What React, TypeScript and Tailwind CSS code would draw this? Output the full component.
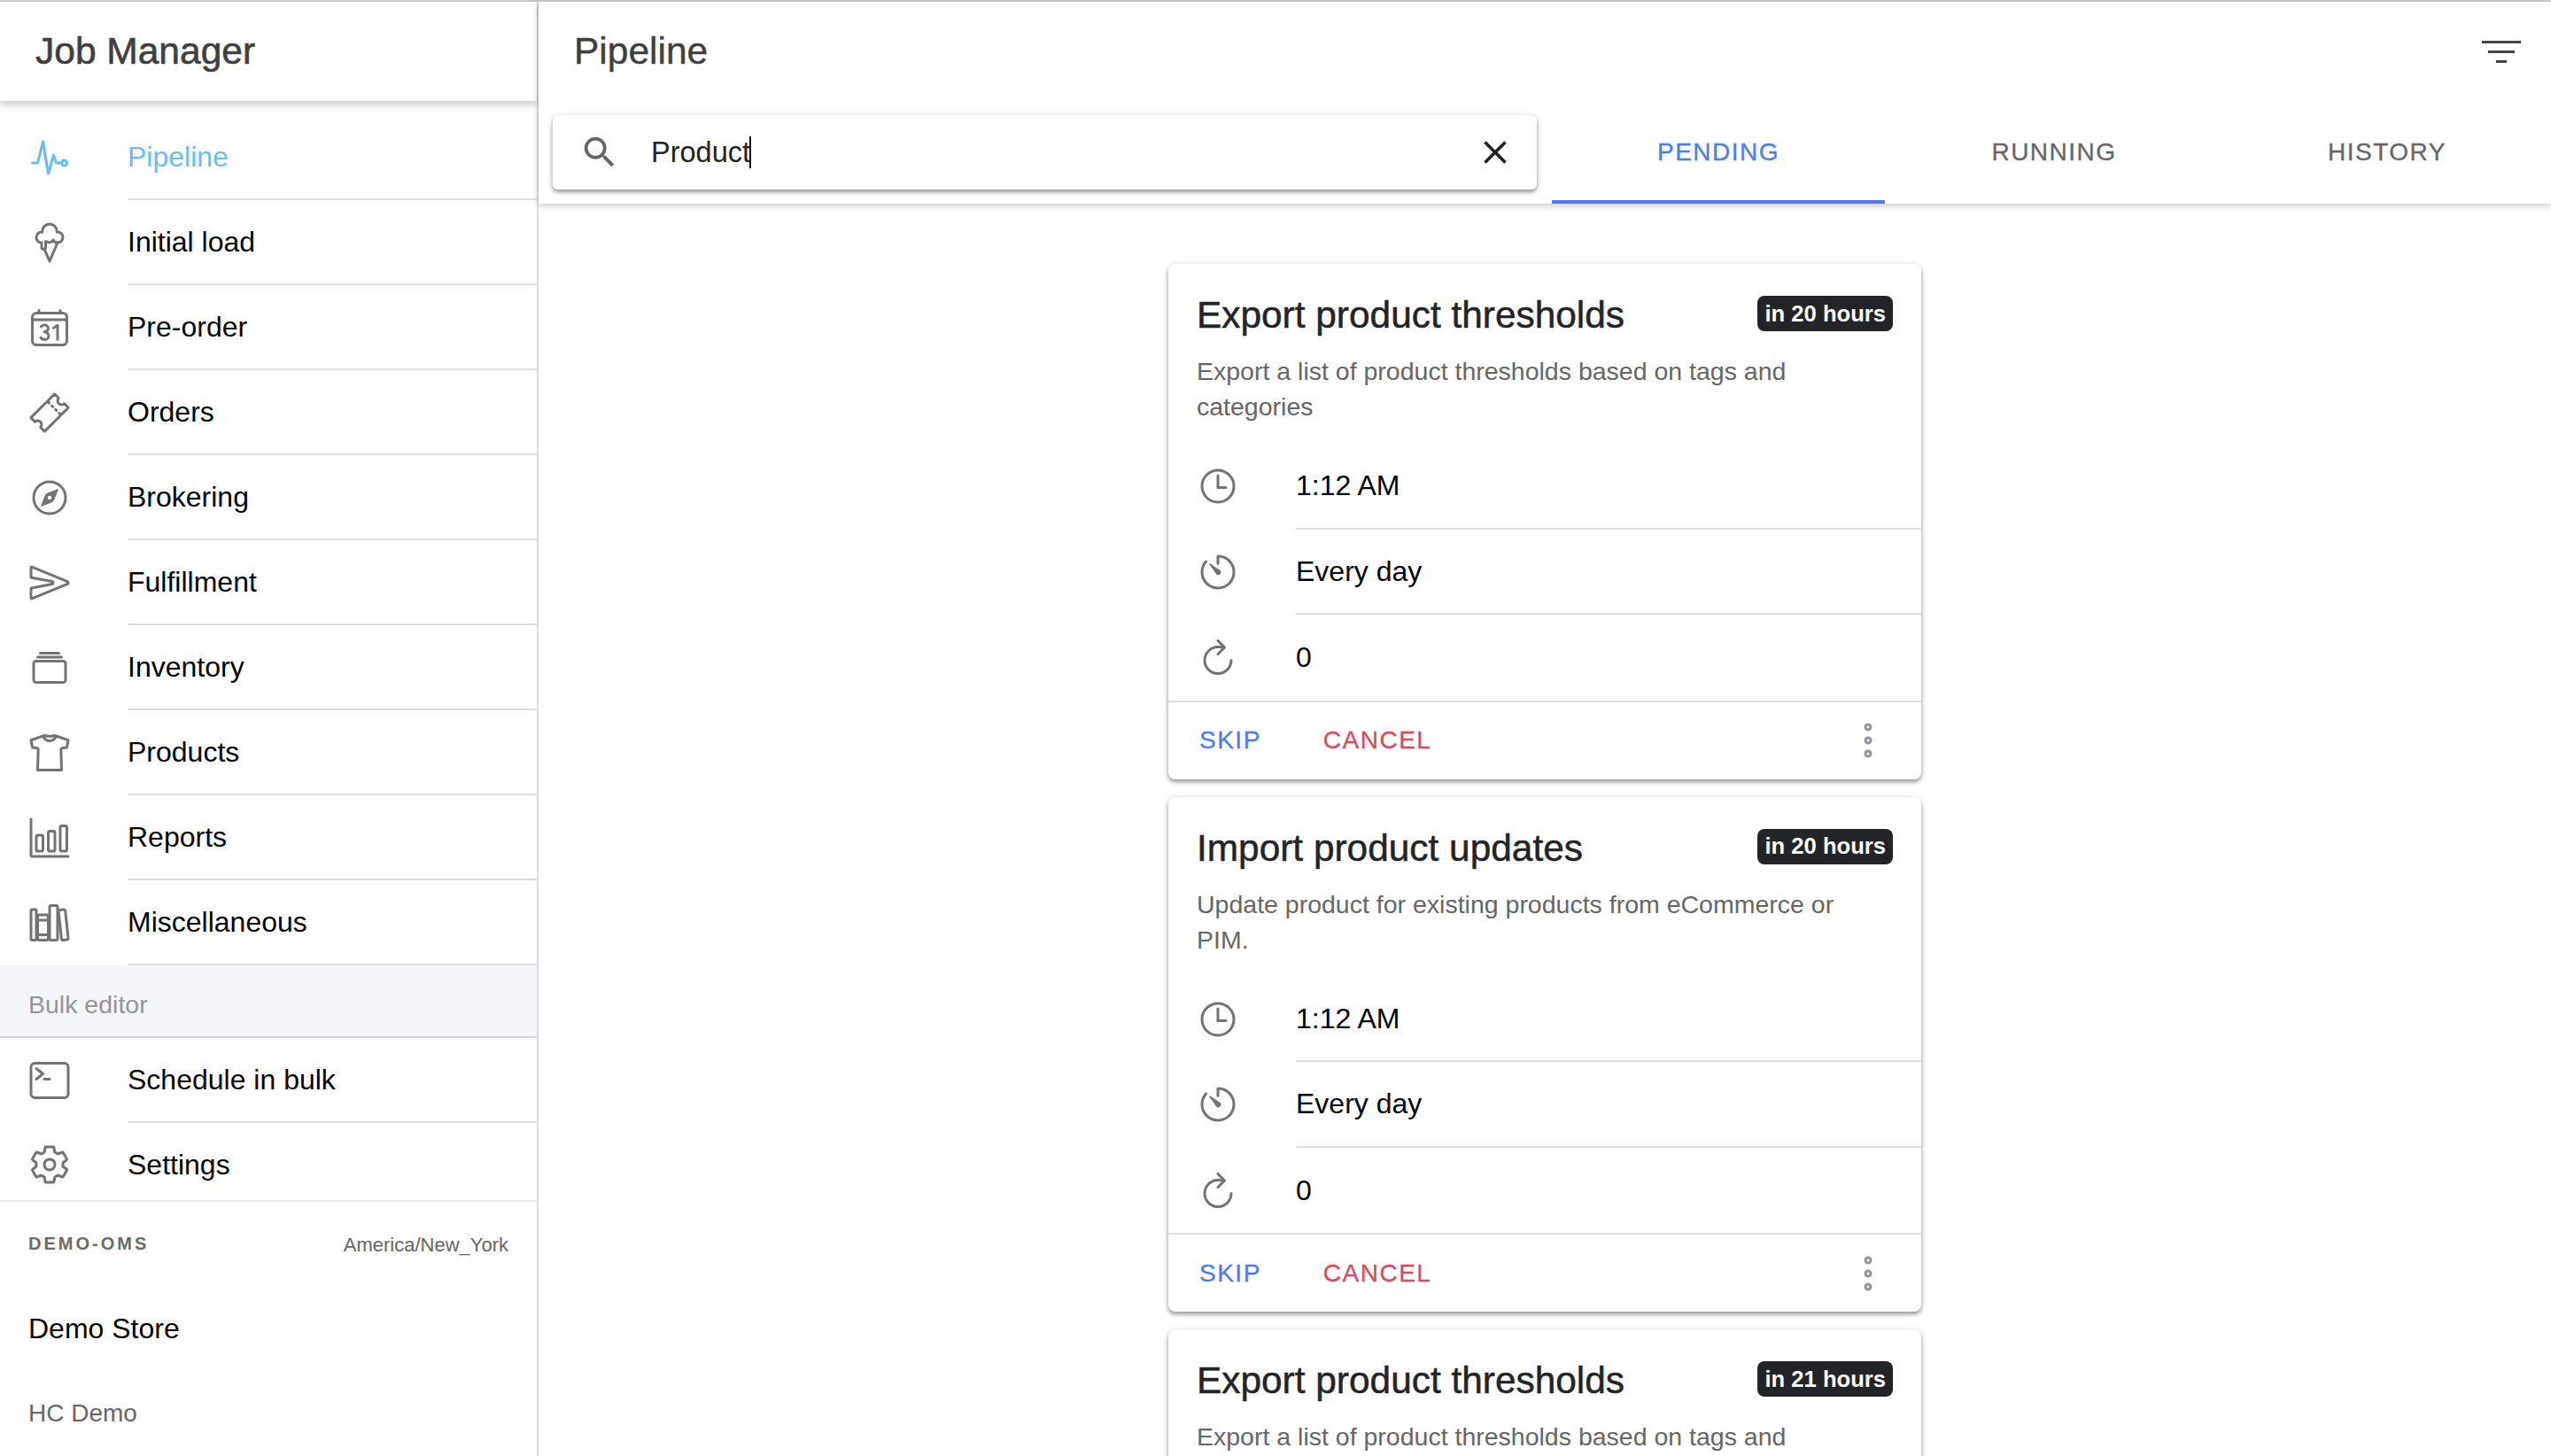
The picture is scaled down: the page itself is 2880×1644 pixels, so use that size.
import type { ComponentType } from 'react';
import { MdClose, MdSearch } from 'react-icons/md';
import {
  IoAlbumsOutline,
  IoBarChartOutline,
  IoCalendarNumberOutline,
  IoCompassOutline,
  IoEllipsisVerticalOutline,
  IoIceCreamOutline,
  IoLibraryOutline,
  IoPulseOutline,
  IoRefreshOutline,
  IoSendOutline,
  IoSettingsOutline,
  IoShirtOutline,
  IoTerminalOutline,
  IoTicketOutline,
  IoTimeOutline,
  IoTimerOutline,
} from 'react-icons/io5';

type NavItem = { label: string; icon: ComponentType<{ className?: string }>; active?: boolean };

const navItems: NavItem[] = [
  { label: 'Pipeline', icon: IoPulseOutline, active: true },
  { label: 'Initial load', icon: IoIceCreamOutline },
  { label: 'Pre-order', icon: IoCalendarNumberOutline },
  { label: 'Orders', icon: IoTicketOutline },
  { label: 'Brokering', icon: IoCompassOutline },
  { label: 'Fulfillment', icon: IoSendOutline },
  { label: 'Inventory', icon: IoAlbumsOutline },
  { label: 'Products', icon: IoShirtOutline },
  { label: 'Reports', icon: IoBarChartOutline },
  { label: 'Miscellaneous', icon: IoLibraryOutline },
];

const jobs = [
  {
    title: 'Export product thresholds',
    badge: 'in 20 hours',
    description: 'Export a list of product thresholds based on tags and categories',
  },
  {
    title: 'Import product updates',
    badge: 'in 20 hours',
    description: 'Update product for existing products from eCommerce or PIM.',
  },
  {
    title: 'Export product thresholds',
    badge: 'in 21 hours',
    description: 'Export a list of product thresholds based on tags and categories',
  },
];

function NavRow({ item, last }: { item: NavItem; last?: boolean }) {
  const Icon = item.icon;
  return (
    <div className={`flex items-stretch ${last ? 'h-[87px] pt-[7px]' : 'h-[96px]'}`}>
      <div className="flex w-[144px] shrink-0 items-center pl-[32px]">
        <Icon className={`h-[48px] w-[48px] ${item.active ? 'text-[#65bdfc]' : 'text-[#737373]'}`} />
      </div>
      <div
        className={`flex flex-1 items-center text-[32px] ${last ? '' : 'border-b-2 border-[#dedede]'} ${
          item.active ? 'text-[#65bdfc]' : 'text-black'
        }`}
      >
        {item.label}
      </div>
    </div>
  );
}

function Sidebar() {
  return (
    <aside className="flex w-[608px] shrink-0 flex-col border-r-2 border-[#dcdcdc] bg-white">
      <div className="relative z-10 flex h-[112px] shrink-0 items-center pl-[40px] text-[42.5px] text-[#3f3f3f] shadow-[0_4px_8px_rgba(0,0,0,0.22)] [-webkit-text-stroke:0.6px_#3f3f3f]">
        Job Manager
      </div>
      <div className="h-[15.5px] shrink-0" />
      {navItems.map((item) => (
        <NavRow key={item.label} item={item} />
      ))}
      <div className="flex h-[82px] shrink-0 items-center border-b-2 border-[#d6d6da] bg-[#f4f5f8] pl-[32px] pt-[9px] text-[28.5px] text-[#92949c]">
        Bulk editor
      </div>
      <NavRow item={{ label: 'Schedule in bulk', icon: IoTerminalOutline }} />
      <NavRow item={{ label: 'Settings', icon: IoSettingsOutline }} last />
      <div className="flex flex-col border-t-2 border-[#e8e8e8] px-[32px]">
        <div className="flex items-center justify-between pt-[30px]">
          <span className="text-[20px] font-bold tracking-[3px] text-[#6b6b6b]">DEMO-OMS</span>
          <span className="mt-[2px] text-[22px] text-[#666666]">America/New_York</span>
        </div>
        <div className="pt-[54px] text-[32px] text-black">Demo Store</div>
        <div className="pt-[51px] text-[28px] text-[#666666]">HC Demo</div>
      </div>
    </aside>
  );
}

function Toolbar() {
  return (
    <div className="relative z-10 shrink-0 bg-white shadow-[0_3px_8px_rgba(0,0,0,0.2)]">
      <div className="flex h-[112px] items-center justify-between pl-[40px] pr-[34px]">
        <span className="text-[42.5px] text-[#3f3f3f] [-webkit-text-stroke:0.4px_#3f3f3f]">Pipeline</span>
        <div className="flex w-[44px] flex-col items-center gap-[8px]">
          <span className="h-[3px] w-[44px] bg-[#444444]" />
          <span className="h-[3px] w-[30px] bg-[#444444]" />
          <span className="h-[3px] w-[12px] bg-[#444444]" />
        </div>
      </div>
      <div className="flex h-[116px] pl-[16px]">
        <div className="mt-[16px] flex h-[84px] w-[1111px] items-center rounded-[6px] bg-white shadow-[0_3px_5px_rgba(0,0,0,0.4),0_0_10px_rgba(0,0,0,0.08)]">
          <MdSearch className="ml-[30px] h-[46px] w-[46px] text-[#666666]" />
          <span className="ml-[35px] flex items-center text-[32.5px] text-[#222222]">
            Product
            <span className="-ml-[1px] h-[36px] w-[2px] bg-[#111111]" />
          </span>
          <MdClose className="ml-auto mr-[25px] h-[44px] w-[44px] text-[#222222]" />
        </div>
        <div className="ml-[17px] flex text-[28px] tracking-[1.5px]">
          {['PENDING', 'RUNNING', 'HISTORY'].map((tab, i) => (
            <div
              key={tab}
              className={`flex w-[376px] shrink-0 items-center justify-center border-b-4 pt-[4px] [-webkit-text-stroke:0.3px] ${
                i === 0 ? 'border-[#4a7df5] text-[#4a7df5]' : 'border-transparent pl-[6px] text-[#666666]'
              }`}
            >
              {tab}
            </div>
          ))}
        </div>
      </div>
    </div>
  );
}

function DetailRow({
  icon: Icon,
  text,
  last,
}: {
  icon: ComponentType<{ className?: string }>;
  text: string;
  last?: boolean;
}) {
  return (
    <div className="flex h-[96.5px] items-stretch">
      <div className="flex w-[144px] shrink-0 items-center pl-[32px]">
        <Icon className="h-[48px] w-[48px] text-[#737373]" />
      </div>
      <div className={`flex flex-1 items-center text-[32px] text-black ${last ? '' : 'border-b-2 border-[#dedede]'}`}>
        {text}
      </div>
    </div>
  );
}

function JobCard({ job }: { job: (typeof jobs)[number] }) {
  return (
    <div className="w-[850px] shrink-0 rounded-[8px] bg-white shadow-[0_3px_5px_rgba(0,0,0,0.4),0_0_10px_rgba(0,0,0,0.08)]">
      <div className="h-[203px] px-[32px] pt-[32px]">
        <div className="flex items-start justify-between">
          <span className="text-[42.4px] leading-[52px] text-[#222428] [-webkit-text-stroke:0.5px_#222428]">{job.title}</span>
          <span className="mt-[4px] flex h-[40px] items-center rounded-[8px] bg-[#222428] px-[8px] text-[25.6px] font-bold text-white">
            {job.badge}
          </span>
        </div>
        <p className="mt-[17px] w-[760px] text-[28.5px] leading-[40px] text-[#666666]">{job.description}</p>
      </div>
      <DetailRow icon={IoTimeOutline} text="1:12 AM" />
      <DetailRow icon={IoTimerOutline} text="Every day" />
      <DetailRow icon={IoRefreshOutline} text="0" last />
      <div className="flex h-[89px] items-center border-t-2 border-[#dedede] pl-[35px] pr-[36px] text-[28px] tracking-[1.5px] [-webkit-text-stroke:0.3px]">
        <span className="text-[#4a7df5]">SKIP</span>
        <span className="ml-[70px] text-[#dc4a5a]">CANCEL</span>
        <IoEllipsisVerticalOutline className="ml-auto h-[48px] w-[48px] text-[#92949c]" />
      </div>
    </div>
  );
}

export default function App() {
  return (
    <div className="flex h-[1644px] w-[2880px] flex-col overflow-hidden bg-white font-['Liberation_Sans',Arial,sans-serif]">
      <div className="h-[2px] shrink-0 bg-[#cccccc]" />
      <div className="flex min-h-0 flex-1">
        <Sidebar />
        <main className="flex min-w-0 flex-1 flex-col">
          <Toolbar />
          <div className="flex flex-col items-center gap-[20px] pt-[68px]">
            {jobs.map((job, i) => (
              <JobCard key={i} job={job} />
            ))}
          </div>
        </main>
      </div>
    </div>
  );
}
